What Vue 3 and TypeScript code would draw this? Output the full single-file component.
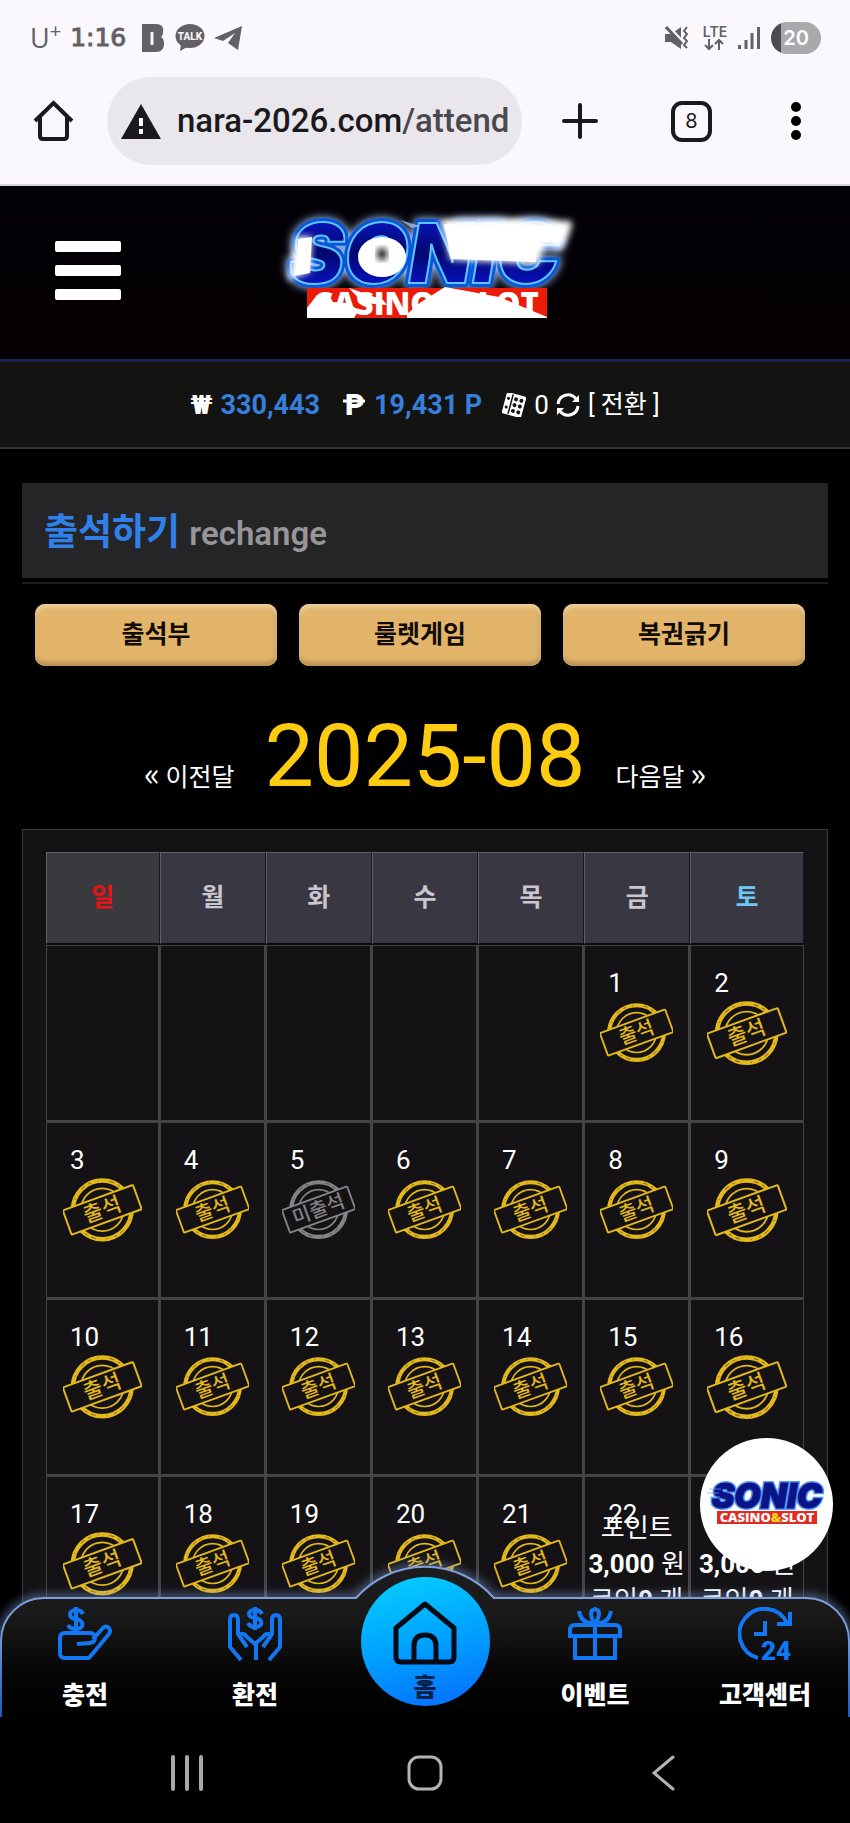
<script setup lang="ts">
type Mark = 'present' | 'absent' | 'reward'
interface Day { n: number; mark: Mark }

const weekdays: string[] = ['일', '월', '화', '수', '목', '금', '토']
const actions: string[] = ['출석부', '룰렛게임', '복권긁기']

const firstWeekday = 5
const lastDay = 23

function markOf(n: number): Mark {
  if (n === 5) return 'absent'
  return n >= 22 ? 'reward' : 'present'
}

const cells: (Day | null)[] = [
  ...Array.from({ length: firstWeekday }, () => null),
  ...Array.from({ length: lastDay }, (_, i) => ({ n: i + 1, mark: markOf(i + 1) })),
]
const weeks: (Day | null)[][] = []
for (let i = 0; i < cells.length; i += 7) weeks.push(cells.slice(i, i + 7))
</script>

<template>
  <div class="screen">
    <div class="chrome">
      <div class="status">
        <span class="carrier">U<sup>+</sup></span>
        <span class="clock">1:16</span>
        <svg class="s-b" width="22" height="28" viewBox="0 0 22 28"><path d="M0 0h14c6 0 8 4 7 8 0 3-1 4-2 5 2 1 3 3 3 7 0 5-3 8-8 8H0z" fill="#636165" /><path d="M10 8v13" stroke="#f6f4f8" stroke-width="3" /></svg>
        <svg class="s-talk" width="30" height="28" viewBox="0 0 30 28"><ellipse cx="15" cy="12" rx="14.500" ry="12" fill="#636165" /><path d="M6 20l-1 7 9-5z" fill="#636165" /><text x="15" y="16" text-anchor="middle" font-family="Roboto, sans-serif" font-weight="800" font-size="10" fill="#faf8fc">TALK</text></svg>
        <svg class="s-tg" width="28" height="26" viewBox="0 0 28 26"><path d="M0 13L28 1 24 25 14 18 21 8 9 16z" fill="#636165" /></svg>
        <span class="spacer"></span>
        <svg width="24" height="24" viewBox="0 0 24 24"><path d="M0 8h6L16 1v22L6 16H0z" fill="#636165" /><path d="M3 0l15 16" stroke="#faf8fc" stroke-width="3" /><path d="M1 1l16 17" stroke="#636165" stroke-width="3" /><path d="M22 1l-3 4 3 3-3 4 3 3-3 4 3 3" fill="none" stroke="#636165" stroke-width="2" /></svg>
        <svg class="s-lte" width="28" height="28" viewBox="0 0 28 28"><text x="14" y="13" text-anchor="middle" font-family="Inter, sans-serif" font-weight="600" font-size="14" fill="#636165">LTE</text><path d="M8 15v10M4 21l4 4 4-4M18 26V16M14 20l4-4 4 4" fill="none" stroke="#636165" stroke-width="2" /></svg>
        <svg class="s-sig" width="22" height="24" viewBox="0 0 22 24"><path d="M1.500 19v4M8 14v9M14 7v16M20.500 1v22" stroke="#636165" stroke-width="3" /></svg>
        <span class="battery"><span>20</span></span>
      </div>
      <div class="toolbar">
        <button class="plain" aria-label="Home"><svg width="41" height="42" viewBox="0 0 41 42"><path d="M2 21L20.500 3 39 21M7 17v19q0 3 3 3h21q3 0 3-3V17" fill="none" stroke="#1b1920" stroke-width="4" /></svg></button>
        <div class="pill">
          <svg width="40" height="35" viewBox="0 0 40 35"><path d="M20 0L40 35H0z" fill="#1b1920" /><path d="M20 14v8M20 25v5" stroke="#fff" stroke-width="4" /></svg>
          <span class="url">nara-2026.com<i>/attend</i></span>
        </div>
        <button class="plain plus" aria-label="New tab"><svg width="36" height="36" viewBox="0 0 36 36"><path d="M18 2v32M2 18h32" stroke="#1b1920" stroke-width="4" stroke-linecap="round" /></svg></button>
        <button class="tabs">8</button>
        <button class="plain more" aria-label="Menu"><svg width="10" height="38" viewBox="0 0 10 38"><circle cx="5" cy="5" r="5" /><circle cx="5" cy="19" r="5" /><circle cx="5" cy="33" r="5" /></svg></button>
      </div>
    </div>

    <header class="site-head">
      <button class="burger" aria-label="Open menu"><b></b><b></b><b></b></button>
      <svg class="logo" width="320" height="125" viewBox="-5 0 320 125" role="img" aria-label="Sonic Casino Slot">
        <defs>
          <filter id="halo" x="-10%" y="-30%" width="120%" height="160%"><feGaussianBlur stdDeviation="4" /></filter>
          <filter id="soft" x="-20%" y="-20%" width="140%" height="140%"><feGaussianBlur stdDeviation="3" /></filter>
          <linearGradient id="ink" x1="0" y1="0" x2="0" y2="1"><stop offset="0" stop-color="#0a1ae0" /><stop offset=".5" stop-color="#030870" /><stop offset="1" stop-color="#0a16e8" /></linearGradient>
        </defs>
        <g font-family="Inter, sans-serif" font-weight="900" font-style="italic" font-size="83" text-anchor="middle">
          <text x="154" y="77" fill="#9fc8ff" stroke="#9fc8ff" stroke-width="9" filter="url(#halo)">SONIC</text>
          <text x="154" y="77" fill="#0a55d8" stroke="#0a55d8" stroke-width="8" stroke-linejoin="round">SONIC</text>
          <text x="154" y="77" fill="url(#ink)" stroke="#5cc4ff" stroke-width="2">SONIC</text>
        </g>
        <path d="M26 30L42 31 40 66 18 74 22 50z" fill="#fff" filter="url(#soft)" />
        <path d="M28 33L42 31 40 67 24 70 28 52z" fill="#fff" />
        <ellipse cx="112" cy="51" rx="24" ry="20" fill="#fff" />
        <ellipse cx="112" cy="48" rx="5" ry="6" fill="#111" filter="url(#soft)" />
        <path d="M130 14L150 20 142 22z" fill="#b8ccec" opacity=".7" />
        <path d="M173 15L240 14 300 17Q298 30 290 42L276 38Q268 46 268 56L182 52z" fill="#fff" stroke="#fff" stroke-width="4" stroke-linejoin="round" filter="url(#soft)" />
        <path d="M174 18L212 20 284 22Q264 34 266 56L181 53z" fill="#fff" />
        <rect x="37" y="82" width="240" height="30" fill="#ea1b08" />
        <text x="156" y="109" text-anchor="middle" font-family="'Open Sans', sans-serif" font-weight="800" font-size="31" fill="#fff">CASINO&amp;SLOT</text>
        <path d="M37 102L47 89 57 86 63 96 77 97 89 104 84 112H37zM79 82l34 12 4 5-24-2zM137 108l14-12 24-15 54 10 48 20v1H137z" fill="#fff" />
      </svg>
    </header>

    <div class="wallet">
      <span class="won">₩</span><b>330,443</b>
      <svg class="peso" width="22" height="26" viewBox="0 0 22 26"><text x="2" y="23" font-family="Roboto, sans-serif" font-weight="900" font-size="30" fill="#fff">P</text><path d="M0 9h22" stroke="#fff" stroke-width="3" /></svg><b>19,431 P</b>
      <svg class="dice" width="24" height="24" viewBox="0 0 24 24"><g transform="rotate(15 12 12)"><rect x="2" y="1" width="20" height="22" rx="2" fill="#fff" /><path d="M8.500 2v20" stroke="#151513" stroke-width="1.500" /><g fill="#151513"><circle cx="12.500" cy="6" r="2" /><circle cx="18" cy="6" r="2" /><circle cx="12.500" cy="12" r="2" /><circle cx="18" cy="12" r="2" /><circle cx="12.500" cy="18" r="2" /><circle cx="18" cy="18" r="2" /><circle cx="5" cy="7" r="1.500" /><circle cx="5" cy="16" r="1.500" /></g></g></svg>
      <span class="coins">0</span>
      <svg class="sync" width="24" height="24" viewBox="0 0 24 24"><path d="M2 11A10 10 0 0 1 20 6M22 13A10 10 0 0 1 4 18" fill="none" stroke="#fff" stroke-width="3" /><path d="M23 2v7h-7zM1 22v-7h7z" fill="#fff" /></svg>
      <a href="#">[ 전환 ]</a>
    </div>

    <main>
      <h1 class="title">출석하기 <small>rechange</small></h1>
      <div class="actions">
        <button v-for="a in actions" :key="a">{{ a }}</button>
      </div>
      <div class="month">
        <a href="#"><span>«</span> 이전달</a><strong>2025-08</strong><a href="#">다음달 <span>»</span></a>
      </div>
      <section class="panel">
        <table>
          <thead>
            <tr><th v-for="w in weekdays" :key="w" scope="col">{{ w }}</th></tr>
          </thead>
          <tbody>
            <tr v-for="(week, r) in weeks" :key="r">
              <td v-for="(day, c) in week" :key="c">
                <template v-if="day">
                  <div class="num">{{ day.n }}</div>
                  <div v-if="day.mark === 'reward'" class="reward">포인트<br /><b>3,000</b> 원<br />코인<b>0</b> 개</div>
                  <div v-else class="stamp" :class="day.mark">
                    <svg viewBox="0 0 79 66">
                      <circle cx="39.500" cy="33" r="29.500" fill="none" stroke="currentColor" stroke-width="4.500" />
                      <circle cx="39.500" cy="33" r="29.500" fill="none" stroke="#141214" stroke-width="1" stroke-dasharray="3 7 1 11 5 4" opacity=".5" />
                      <circle cx="39.500" cy="33" r="21.500" fill="none" stroke="currentColor" stroke-width="1.800" />
                      <g transform="rotate(-20 39.500 33)">
                        <rect x="2" y="20" width="75" height="26" rx="1" fill="#141214" stroke="currentColor" stroke-width="2" />
                        <text x="39.500" y="40" text-anchor="middle" font-size="21" font-weight="500" fill="currentColor">{{ day.mark === 'present' ? '출석' : '미출석' }}</text>
                      </g>
                    </svg>
                  </div>
                </template>
              </td>
            </tr>
          </tbody>
        </table>
      </section>
    </main>

    <div class="dock">
      <a class="badge" href="#" aria-label="Sonic Casino Slot">
        <svg width="120" height="50" viewBox="0 0 120 50">
          <g font-family="Inter, sans-serif" font-weight="900" font-style="italic" font-size="34" text-anchor="middle">
            <text x="60" y="28" fill="#2f7ff5" stroke="#2f7ff5" stroke-width="4" opacity=".8">SONIC</text>
            <text x="60" y="28" fill="#0a1488" stroke="#0a1488">SONIC</text>
          </g>
          <path d="M2 9h12M0 13h12M3 17h10" stroke="#6ba5f5" opacity=".7" />
          <rect x="10" y="31" width="100" height="13" fill="#e02a22" />
          <text x="60" y="42" text-anchor="middle" font-family="'Open Sans', sans-serif" font-weight="800" font-size="13" fill="#fff">CASINO<tspan fill="#ffd21e">&amp;</tspan>SLOT</text>
        </svg>
      </a>
      <svg class="shape" viewBox="0 0 850 150" preserveAspectRatio="none">
        <defs>
          <linearGradient id="fill" x1="0" y1="0" x2="0" y2="1"><stop offset="0" stop-color="#1d1d1f" /><stop offset=".3" stop-color="#1a1a1b" /><stop offset=".75" stop-color="#040405" /><stop offset="1" stop-color="#000" /></linearGradient>
          <linearGradient id="edge" x1="0" y1="0" x2="0" y2="1"><stop offset="0" stop-color="#7e9fdc" /><stop offset=".4" stop-color="#7e9fdc" /><stop offset="1" stop-color="#2257b8" /></linearGradient>
          <filter id="glow" x="-5%" y="-20%" width="110%" height="140%"><feGaussianBlur stdDeviation="5" /></filter>
        </defs>
        <path d="M1 150V74A43 43 0 0 1 44 31H356A92 92 0 0 1 494 31H806A43 43 0 0 1 849 74V150" fill="none" stroke="#7e9fdc" stroke-width="7" filter="url(#glow)" opacity=".6" />
        <path d="M1 150V74A43 43 0 0 1 44 31H356A92 92 0 0 1 494 31H806A43 43 0 0 1 849 74V150" fill="url(#fill)" stroke="url(#edge)" stroke-width="2" />
      </svg>
      <nav>
        <a href="#">
          <svg width="54" height="54" viewBox="0 0 54 54" fill="none" stroke="#1277f2" stroke-width="4" stroke-linejoin="round">
            <path d="M7 26h26q4 1 4 5t-5 5l-13 1M35 32L45 21q3-3 6 0 2 3 0 6L31 51H7q-5 0-5-5V31q0-5 5-5" /><path d="M25 7q-2-4-7-4c-8 0-8 8 0 9s9 10 0 10q-6 0-8-4M18 0v26" />
          </svg><span>충전</span>
        </a>
        <a href="#">
          <svg width="54" height="54" viewBox="0 0 54 54" fill="none" stroke="#1277f2" stroke-width="4" stroke-linejoin="round">
            <path d="M13 53L2 40V13q0-5 4-5t4 5v14l9 13M41 53L52 40V13q0-5-4-5t-4 5v14l-9 13M11 28q4-3 8 2l8 7 8-7q4-5 8-2M28 36v17" /><path d="M34 7q-2-4-7-4c-8 0-8 7 0 8s9 9 0 9q-5 0-7-4M27 0v23" />
          </svg><span>환전</span>
        </a>
        <a class="home" href="#">
          <svg width="64" height="64" viewBox="0 0 64 64" fill="none" stroke="#050b14" stroke-width="5" stroke-linejoin="round"><path d="M3 27L32 3l29 24v29q0 5-5 5H8q-5 0-5-5zM21 61V45q0-11 11-11t11 11v16" /></svg><span>홈</span>
        </a>
        <a href="#">
          <svg width="54" height="54" viewBox="0 0 54 54" fill="none" stroke="#1277f2" stroke-width="4"><path d="M27 17v35M2 29v-6q0-5 5-5h40q5 0 5 5v6zM7 29v22h40V29M27 17q-8-13 0-15 8 2 0 15M24 16Q13 16 11 4M30 16Q41 16 43 4" /></svg><span>이벤트</span>
        </a>
        <a href="#">
          <svg width="54" height="54" viewBox="0 0 54 54" fill="none" stroke="#1277f2" stroke-width="4"><path d="M20 51A25 25 0 1 1 49 16M52 5v12H39M27 14v13H16" /><text x="23" y="53" font-family="Roboto, sans-serif" font-weight="900" font-size="26" fill="#1277f2" stroke="none">24</text></svg><span>고객센터</span>
        </a>
      </nav>
      <div class="system">
        <button class="plain" aria-label="Recents"><svg width="34" height="36" viewBox="0 0 34 36"><path d="M3 2v32M17 2v32M31 2v32" stroke="#a9a7aa" stroke-width="4" stroke-linecap="round" /></svg></button>
        <button class="plain" aria-label="Home screen"><svg width="36" height="36" viewBox="0 0 36 36"><rect x="2" y="2" width="32" height="32" rx="10" fill="none" stroke="#b4b2b5" stroke-width="3" /></svg></button>
        <button class="plain" aria-label="Back"><svg width="24" height="36" viewBox="0 0 24 36"><path d="M22 2L3 18l19 16" fill="none" stroke="#b4b2b5" stroke-width="3" stroke-linecap="round" /></svg></button>
      </div>
    </div>
  </div>
</template>

<style>
html, body { margin: 0; background: #000; }
</style>

<style scoped>
* { box-sizing: border-box; }
.screen { position: relative; height: 100vh; overflow: hidden; background: #000; color: #fff; font-family: Roboto, "Noto Sans CJK KR", sans-serif; font-size: 26px; line-height: 36px; }
svg { display: block; flex: none; }
a { color: inherit; text-decoration: none; }
button { font: inherit; border: 0; padding: 0; cursor: pointer; }
.plain { background: none; }

.chrome { height: 186px; background: #faf8fc; border-bottom: 2px solid #d5d4d7; color: #1b1920; }
.status { display: flex; align-items: center; height: 76px; padding: 0 29px 0 30px; color: #636165; }
.carrier { font-family: "Open Sans", sans-serif; font-weight: 400; font-size: 27px; }
.carrier sup { font-size: 20px; line-height: 0; }
.clock { margin-left: 9px; font-family: "DejaVu Sans", sans-serif; font-size: 25px; -webkit-text-stroke: 1px #636165; }
.s-b { margin-left: 16px; }
.s-talk { margin-left: 11px; }
.s-tg { margin-left: 9px; }
.spacer { flex: 1; }
.s-lte { margin-left: 12px; }
.s-sig { margin-left: 9px; }
.battery { display: flex; align-items: center; justify-content: center; width: 50px; height: 32px; margin-left: 11px; border-radius: 16px; background: linear-gradient(90deg, #4d4b4f 10px, #aaa8ab 10px); color: #fff; font-family: Inter, sans-serif; font-weight: 600; font-size: 20px; }
.toolbar { display: flex; align-items: center; height: 90px; padding: 0 49px 0 33px; }
.pill { flex: 1; display: flex; align-items: center; gap: 16px; height: 88px; margin-left: 33px; padding-left: 14px; border-radius: 44px; background: #e9e7eb; white-space: nowrap; }
.url { font-weight: 500; font-size: 33px; }
.url i { font-style: normal; color: #4a484e; }
.plus { margin-left: 40px; }
.tabs { width: 41px; height: 41px; margin-left: 73px; border: 4px solid #1b1920; border-radius: 11px; background: none; color: #1b1920; font-family: Inter, sans-serif; font-size: 20px; line-height: 33px; }
.more { margin-left: 79px; }

.site-head { display: grid; grid-template-columns: 1fr 320px 1fr; align-items: center; height: 176px; padding: 0 55px; border-bottom: 3px solid #1d2350; background: linear-gradient(#020108, #050002); }
.burger { display: grid; gap: 13px; width: 66px; margin-top: -4px; background: none; }
.burger b { height: 11px; border-radius: 2px; background: #fff; }
.logo { margin-top: -9px; }

.wallet { display: flex; align-items: center; justify-content: center; height: 87px; border-bottom: 2px solid #353437; background: #131311; white-space: nowrap; }
.wallet b { color: #367fdd; font-size: 27px; }
.won { margin-right: 8px; font-weight: 900; }
.peso { margin: 0 9px 0 23px; }
.dice { margin: 0 8px 0 20px; }
.coins { margin-right: 7px; }
.sync { margin-right: 8px; }
.wallet a { font-size: 25px; }

main { padding: 34px 22px 0; }
.title { height: 95px; margin: 0 0 26px; padding: 4px 22px 0; background: #252427; color: #2f80e8; font-size: 37px; font-weight: 700; line-height: 91px; box-shadow: 0 4px 0 #000, 0 6px 0 #1c1b1e; }
.title small { color: #969598; font-size: 33px; font-weight: 600; }
.actions { display: grid; grid-template-columns: repeat(3, 1fr); gap: 22px; padding: 0 23px 0 13px; }
.actions button { height: 62px; border-radius: 10px; background: #e2b56b; box-shadow: inset 0 3px 4px #f0d3a0, inset 0 -4px 4px #b98f52, inset -2px 0 3px #c59a5c; color: #120c05; font-size: 25px; font-weight: 700; }
.month { display: flex; justify-content: center; align-items: baseline; gap: 30px; padding: 38px 0 21px; }
.month strong { color: #fdcc10; font-size: 88px; font-weight: 400; line-height: 104px; }
.month a { font-family: "Noto Sans CJK KR", sans-serif; font-size: 25px; }
.month span { font-size: 33px; line-height: 36px; }

.panel { padding: 22px 23px; border: 1px solid #3d3b3e; background: #141214; }
table { width: 100%; table-layout: fixed; border-collapse: separate; border-spacing: 0; }
th { width: 14%; height: 93px; padding: 0; border: 1px solid #605e66; border-right-color: #18161f; border-bottom: 2px solid #0c0b0e; background: #393741; color: #c9c6cf; font-size: 25px; font-weight: 700; }
th:first-child { width: 15%; background: #3a3a3e; color: #e61414; }
th:last-child { width: 15%; color: #6cc8f5; }
td { height: 177px; padding: 19px 0 0; border: 1px solid #454347; border-right-width: 2px; border-bottom-width: 2px; vertical-align: top; }
td:last-child { border-right-width: 1px; }
.num { padding-left: 23px; }
.stamp { display: flex; align-items: center; justify-content: center; height: 64px; font-family: "Noto Sans CJK KR", sans-serif; color: #e3b81c; }
.stamp.absent { color: #858387; }
.stamp svg { width: 71%; }
.reward { margin-top: -22px; text-align: center; white-space: nowrap; }

.dock { position: absolute; left: 0; right: 0; bottom: 0; }
.shape { position: absolute; left: 0; top: -31px; width: 100%; height: 150px; overflow: visible; }
.badge { position: absolute; right: 17px; top: -160px; display: flex; align-items: center; justify-content: center; width: 133px; height: 133px; border-radius: 50%; background: #fff; }
nav { position: relative; display: grid; grid-template-columns: repeat(5, 1fr); height: 119px; font-size: 25px; font-weight: 900; }
nav a { display: flex; flex-direction: column; align-items: center; gap: 17px; padding-top: 9px; }
nav .home { justify-self: center; gap: 5px; width: 129px; height: 129px; margin-top: -21px; padding-top: 24px; border-radius: 50%; background: linear-gradient(165deg, #04c8ff 10%, #00a2ff 50%, #0570ff 95%); color: #04204a; }
.system { position: relative; display: grid; grid-template-columns: 238px 238px 238px; justify-content: center; justify-items: center; height: 106px; padding-top: 6px; background: #000; }
</style>
